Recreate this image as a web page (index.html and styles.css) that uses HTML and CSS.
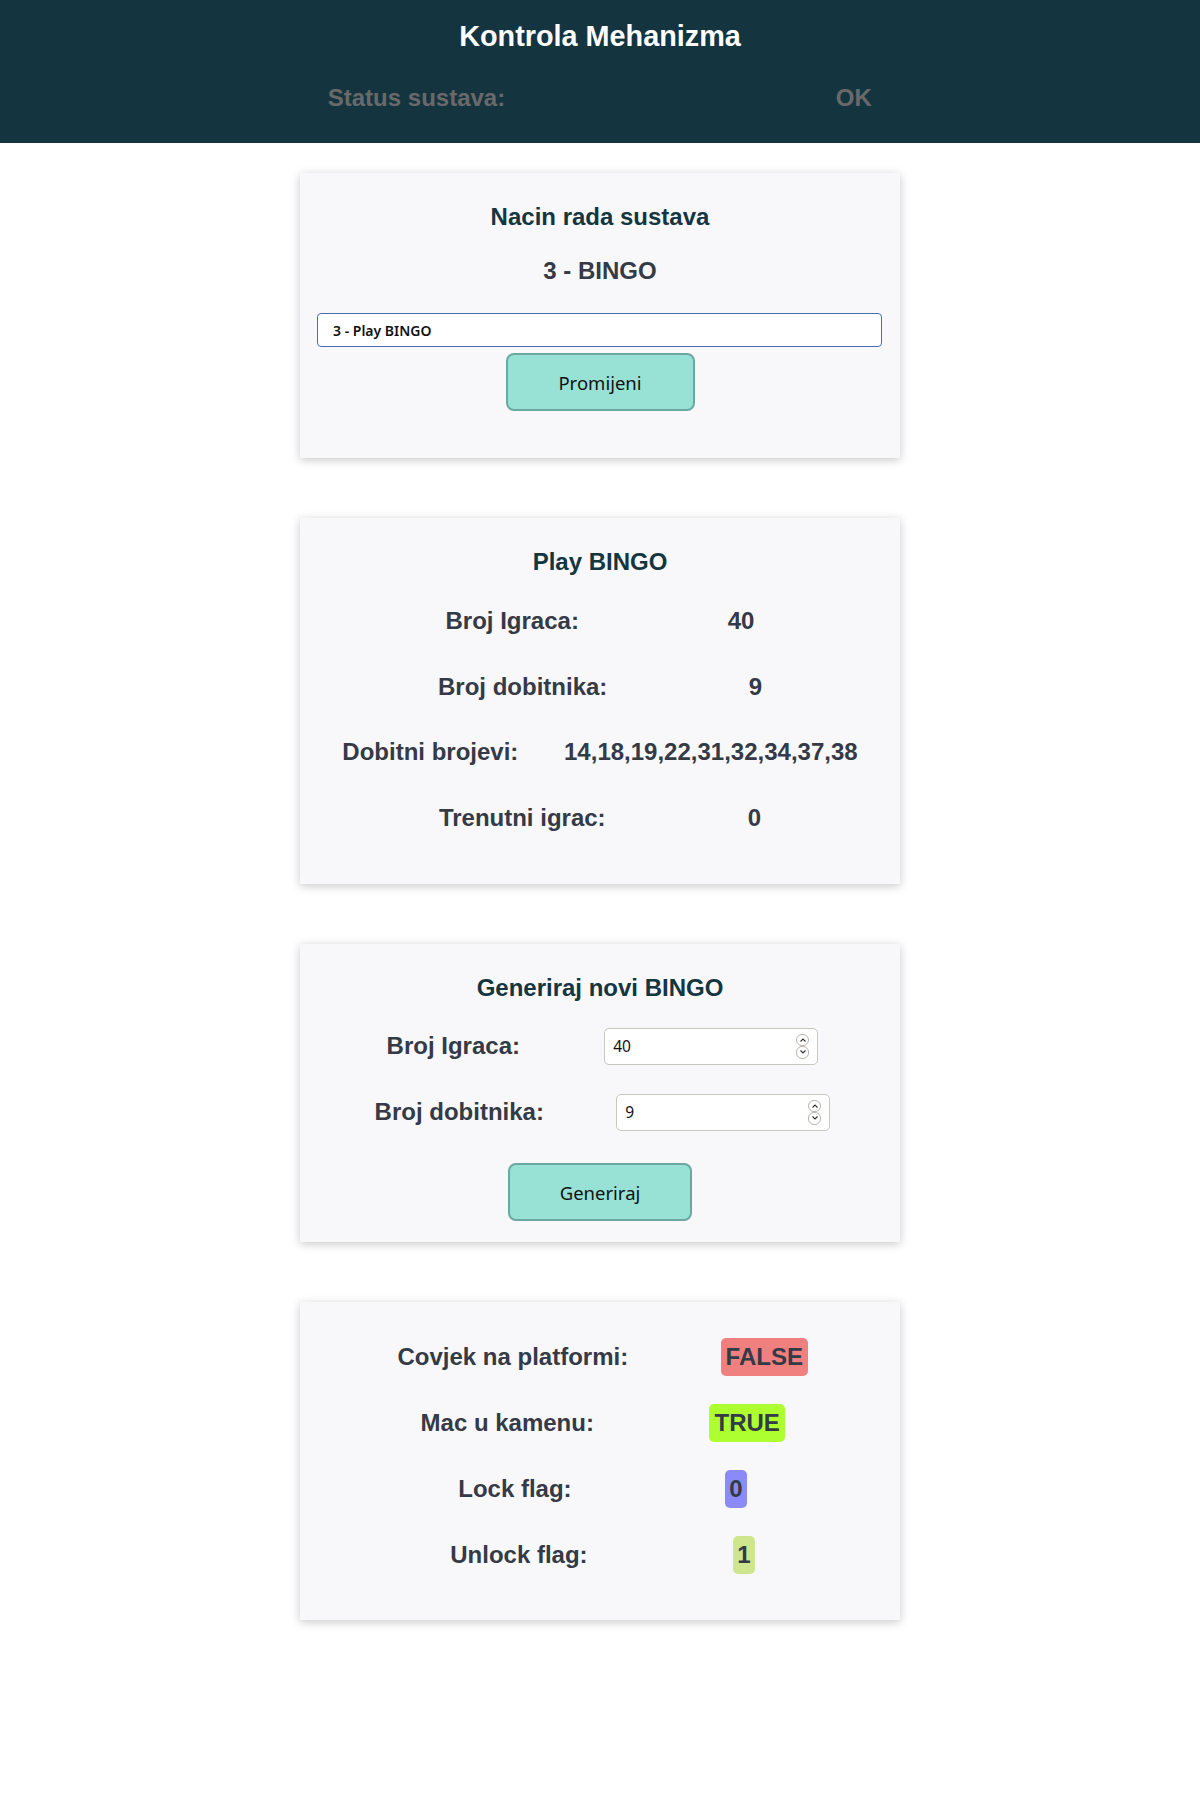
FILE: index.html
```html
<!DOCTYPE html>
<html lang="hr">
<head>
<meta charset="utf-8">
<title>Kontrola Mehanizma</title>
<link rel="stylesheet" href="styles.css">
</head>
<body>
<header class="topbar">
  <h1 class="topbar-title">Kontrola Mehanizma</h1>
  <div class="status-row">
    <span>Status sustava:</span>
    <span>OK</span>
  </div>
</header>
<main class="content">
  <section class="card card-mode">
    <h2 class="card-title">Nacin rada sustava</h2>
    <div class="mode-value">3 - BINGO</div>
    <select class="mode-select">
      <option>3 - Play BINGO</option>
    </select>
    <button class="btn">Promijeni</button>
  </section>

  <section class="card card-play">
    <h2 class="card-title">Play BINGO</h2>
    <div class="rows">
      <div class="row"><span class="cell">Broj Igraca:</span><span class="cell">40</span></div>
      <div class="row"><span class="cell">Broj dobitnika:</span><span class="cell">9</span></div>
      <div class="row"><span class="cell">Dobitni brojevi:</span><span class="cell">14,18,19,22,31,32,34,37,38</span></div>
      <div class="row"><span class="cell">Trenutni igrac:</span><span class="cell">0</span></div>
    </div>
  </section>

  <section class="card card-gen">
    <h2 class="card-title">Generiraj novi BINGO</h2>
    <div class="rows rows-form">
      <div class="row"><span class="cell">Broj Igraca:</span>
        <div class="num-input"><input class="num-field" type="text" value="40"><span class="spin"><span class="spin-btn"><svg viewBox="0 0 8 6" width="8" height="6"><path d="M1.5 4.5 L4 2 L6.5 4.5" fill="none" stroke="#333" stroke-width="1.1"/></svg></span><span class="spin-btn"><svg viewBox="0 0 8 6" width="8" height="6"><path d="M1.5 1.5 L4 4 L6.5 1.5" fill="none" stroke="#333" stroke-width="1.1"/></svg></span></span></div>
      </div>
      <div class="row"><span class="cell">Broj dobitnika:</span>
        <div class="num-input"><input class="num-field" type="text" value="9"><span class="spin"><span class="spin-btn"><svg viewBox="0 0 8 6" width="8" height="6"><path d="M1.5 4.5 L4 2 L6.5 4.5" fill="none" stroke="#333" stroke-width="1.1"/></svg></span><span class="spin-btn"><svg viewBox="0 0 8 6" width="8" height="6"><path d="M1.5 1.5 L4 4 L6.5 1.5" fill="none" stroke="#333" stroke-width="1.1"/></svg></span></span></div>
      </div>
    </div>
    <button class="btn btn-gen">Generiraj</button>
  </section>

  <section class="card card-flags">
    <div class="rows">
      <div class="row"><span class="cell">Covjek na platformi:</span><span class="badge badge-false">FALSE</span></div>
      <div class="row"><span class="cell">Mac u kamenu:</span><span class="badge badge-true">TRUE</span></div>
      <div class="row"><span class="cell">Lock flag:</span><span class="badge badge-lock">0</span></div>
      <div class="row"><span class="cell">Unlock flag:</span><span class="badge badge-unlock">1</span></div>
    </div>
  </section>
</main>
</body>
</html>
```
FILE: styles.css
```css
* { box-sizing: border-box; }
html, body { margin: 0; padding: 0; background: #ffffff; }
body {
  font-family: "Liberation Sans", Arial, sans-serif;
  color: #343a46;
}

.topbar {
  background: #143540;
  height: 143px;
  padding-top: 20px;
  overflow: hidden;
}
.topbar-title {
  margin: 0;
  text-align: center;
  color: #ffffff;
  font-size: 28.8px;
  line-height: 33px;
  font-weight: bold;
}
.status-row {
  margin: 31px -2.5px 0 -2.9px;
  display: flex;
  justify-content: space-evenly;
  font-size: 24px;
  line-height: 28px;
  font-weight: bold;
  color: #696969;
}

.content {
  padding: 30px 0 60px;
  display: flex;
  flex-direction: column;
  gap: 60px;
}

.card {
  width: 600px;
  margin: 0 auto;
  background: #f8f8fa;
  box-shadow: 0 2px 9px rgba(0, 0, 0, 0.22);
  display: flex;
  flex-direction: column;
}

.card-title {
  margin: 0;
  padding-top: 30px;
  text-align: center;
  font-size: 24px;
  line-height: 28px;
  font-weight: bold;
  color: #14363f;
}

.card-mode { padding-bottom: 47px; }
.mode-value {
  margin-top: 25.5px;
  text-align: center;
  font-size: 24px;
  line-height: 28px;
  font-weight: bold;
}
.mode-select {
  appearance: none;
  -webkit-appearance: none;
  margin: 28.5px 0 0 17px;
  width: 565px;
  height: 34px;
  border: 1px solid #4a6db3;
  border-radius: 4px;
  background: #ffffff;
  padding: 0 0 0 15px;
  font-family: "Noto Sans", "Open Sans", sans-serif;
  font-size: 14px;
  font-weight: 600;
  color: #111;
}

.btn {
  align-self: center;
  margin-top: 6px;
  width: 189px;
  height: 58px;
  background: #98e2d5;
  border: 2px solid #6aa8a2;
  border-radius: 8px;
  font-family: "Noto Sans", "Open Sans", sans-serif;
  font-size: 18.5px;
  color: #111;
  padding: 0;
}
.btn-gen {
  width: 184px;
  margin-top: 32px;
}

.rows {
  margin-top: 26px;
  display: flex;
  flex-direction: column;
  gap: 27.7px;
}
.card-play { padding-bottom: 47px; }
.card-play .row { margin: 0 -3.3px; }
.card-gen { padding-bottom: 21px; }
.rows-form { gap: 28px; margin-top: 25px; }
.rows-form .row { padding-left: 2.4px; margin-right: -2.4px; }
.card-flags { padding-top: 36px; padding-bottom: 46px; }
.card-flags .rows { margin-top: 0; gap: 28px; }
.card-flags .row { padding-left: 5px; margin-right: -0.4px; }

.row {
  display: flex;
  justify-content: space-evenly;
  align-items: center;
  font-size: 24px;
  line-height: 28px;
  font-weight: bold;
}
.cell { padding: 5px 0; }

.num-input {
  width: 214px;
  height: 37px;
  background: #ffffff;
  border: 1px solid #cac6c0;
  border-radius: 5px;
  display: flex;
  align-items: center;
  padding: 0 8px 0 8px;
}
.num-field {
  flex: 1;
  min-width: 0;
  border: none;
  outline: none;
  background: transparent;
  font-family: "Noto Sans", "Open Sans", sans-serif;
  font-size: 15.5px;
  color: #111;
  padding: 0;
}
.spin {
  display: flex;
  flex-direction: column;
  width: 13px;
}
.spin-btn {
  width: 13px;
  height: 12.5px;
  border: 1px solid #b8b4ae;
  border-radius: 6px;
  display: flex;
  align-items: center;
  justify-content: center;
  background: #fff;
}

.badge {
  padding: 5px 5px;
  border-radius: 5px;
}
.badge-false { background: #f08080; }
.badge-true { background: #adff2f; }
.badge-lock { background: #8a8af8; padding: 5px 4.5px; }
.badge-unlock { background: #cfe68f; padding: 5px 4.5px; }
```
